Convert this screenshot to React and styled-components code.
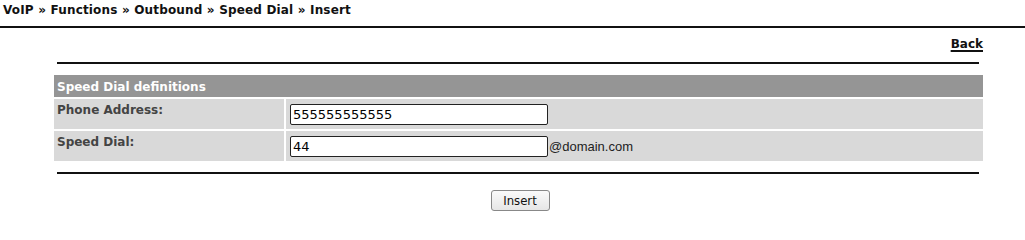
import React from 'react';
import styled, { createGlobalStyle } from 'styled-components';

const Global = createGlobalStyle`
  body {
    margin: 0;
    background: #fff;
    font-family: "DejaVu Sans", Verdana, sans-serif;
    font-size: 12px;
    color: #000;
  }
`;

const Crumbs = styled.div`
  font-weight: bold;
  font-size: 12px;
  letter-spacing: 0.17px;
  padding: 3px 3px 0;
  height: 19px;
  color: #111;
`;

const Rule = styled.hr`
  border: 0;
  border-top: 2px solid #111;
  margin: ${(p) => p.$margin || '0'};
`;

const Content = styled.div`
  margin: 0 42px 0 54px;
`;

const BackRow = styled.div`
  display: flex;
  justify-content: flex-end;
  padding: 9px 0 0;
  height: 34px;
  box-sizing: border-box;
`;

const BackLink = styled.a`
  font-weight: bold;
  color: #111;
  text-decoration: underline;
  text-underline-offset: 2px;
  text-decoration-thickness: 2px;
`;

const Table = styled.div`
  display: grid;
  grid-template-columns: 230px 1fr;
  gap: 2px;
  margin: 11px 0 11px;
`;

const Caption = styled.div`
  grid-column: 1 / -1;
  background: #959595;
  color: #fff;
  font-weight: bold;
  height: 22px;
  display: flex;
  align-items: center;
  padding: 1px 3px 0;
  box-sizing: border-box;
`;

const Label = styled.div`
  background: #d9d9d9;
  color: #444;
  font-weight: bold;
  height: 30px;
  padding: 4px 3px 0;
  box-sizing: border-box;
`;

const Field = styled.div`
  background: #d9d9d9;
  height: 30px;
  display: flex;
  align-items: center;
  padding: 0 4px 0 4px;
  box-sizing: border-box;
`;

const Input = styled.input`
  width: 258px;
  height: 21px;
  box-sizing: border-box;
  border: 1px solid #222;
  border-radius: 2px;
  font-family: "DejaVu Sans", Verdana, sans-serif;
  font-size: 13px;
  padding: 1px 2px;
  color: #000;
  outline: none;
`;

const Suffix = styled.span`
  font-family: "Liberation Sans", Arial, sans-serif;
  font-size: 13px;
  color: #222;
  margin-left: 1px;
`;

const Actions = styled.div`
  display: flex;
  justify-content: center;
  padding: 16px 0 0;
`;

const Button = styled.button`
  font-family: "DejaVu Sans Condensed", "DejaVu Sans", sans-serif;
  font-size: 13px;
  color: #111;
  width: 59px;
  height: 21px;
  border: 1px solid #888;
  border-radius: 3px;
  background: linear-gradient(#fafafa, #e6e6e6);
  padding: 0;
  margin-left: 3px;
`;

export default function App() {
  return (
    <>
      <Global />
      <Crumbs>VoIP » Functions » Outbound » Speed Dial » Insert</Crumbs>
      <Rule $margin="4px 0 0" />
      <Content>
        <BackRow>
          <BackLink href="#">Back</BackLink>
        </BackRow>
        <Rule $margin="0 4px 0 3px" />
        <Table>
          <Caption>Speed Dial definitions</Caption>
          <Label>Phone Address:</Label>
          <Field>
            <Input defaultValue="555555555555" />
          </Field>
          <Label>Speed Dial:</Label>
          <Field>
            <Input defaultValue="44" />
            <Suffix>@domain.com</Suffix>
          </Field>
        </Table>
        <Rule $margin="0 4px 0 3px" />
        <Actions>
          <Button>Insert</Button>
        </Actions>
      </Content>
    </>
  );
}
